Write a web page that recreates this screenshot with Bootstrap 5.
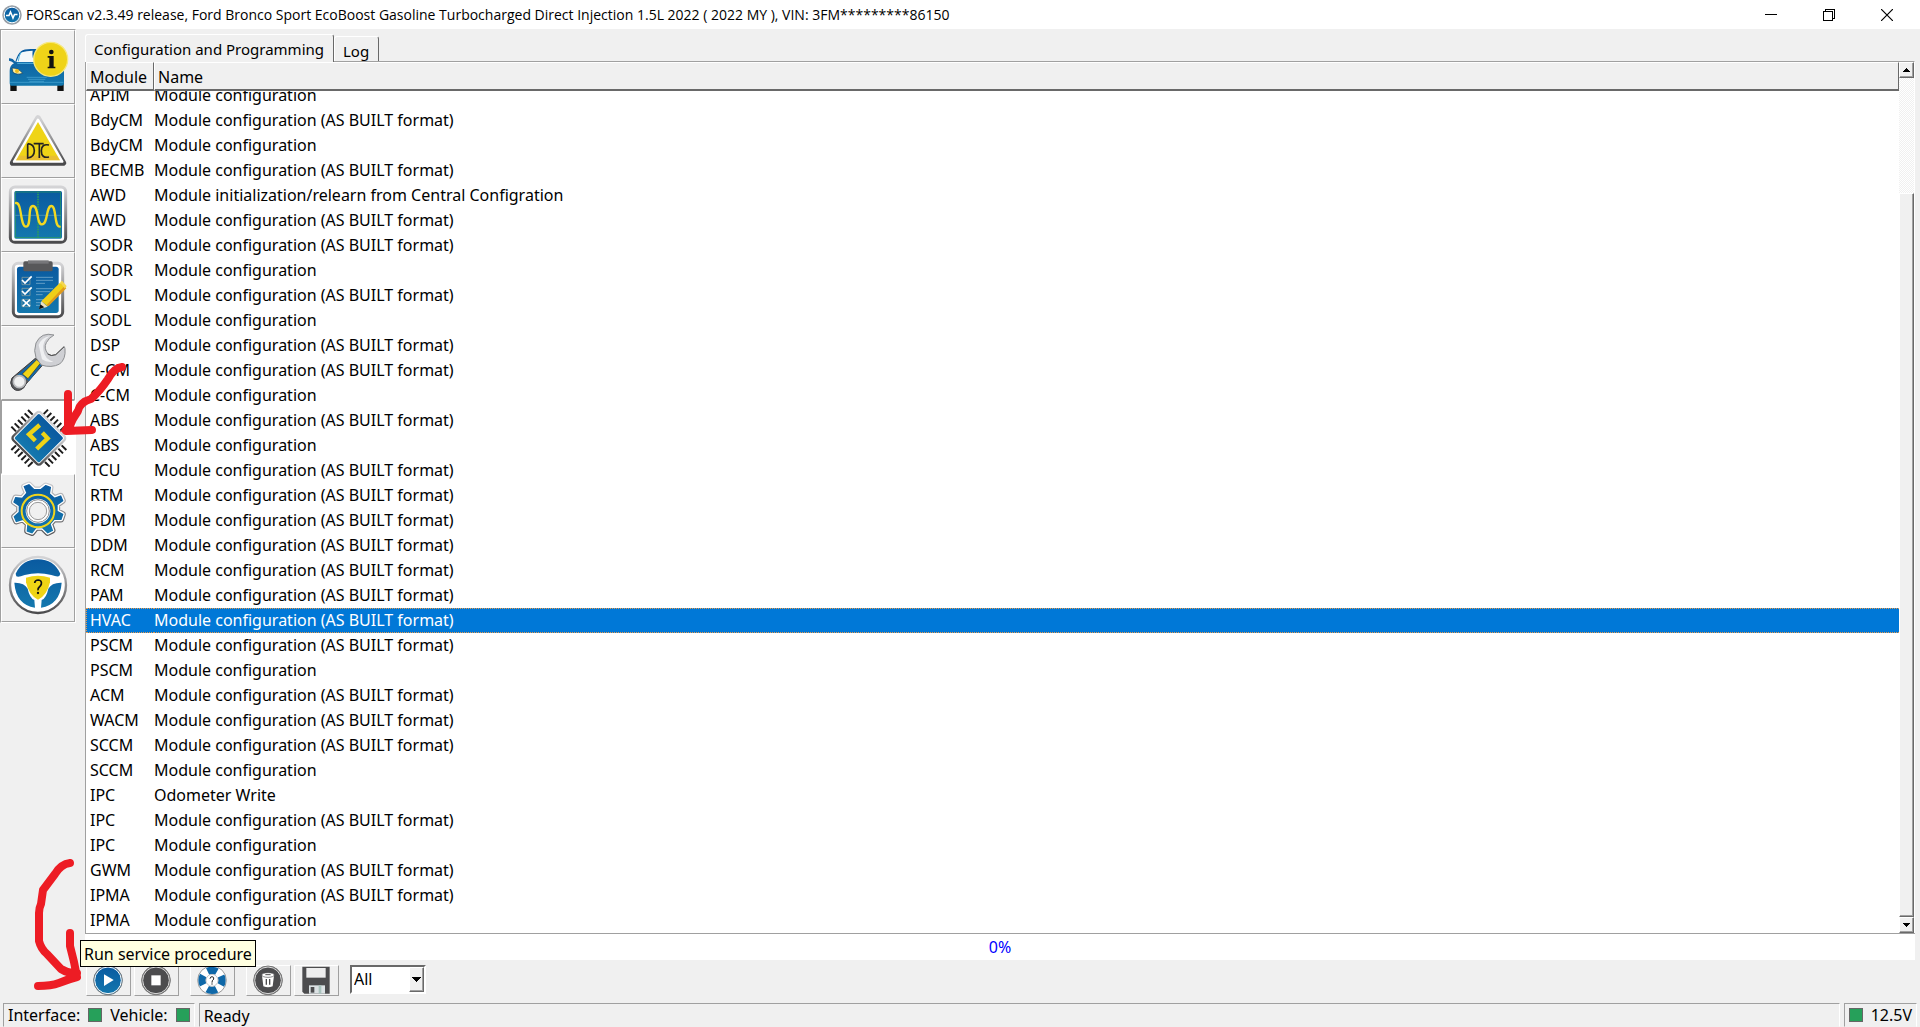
<!DOCTYPE html>
<html lang="en">
<head>
<meta charset="utf-8">
<meta name="viewport" content="width=device-width, initial-scale=1">
<title>FORScan v2.3.49 release</title>
<link href="https://cdn.jsdelivr.net/npm/bootstrap@5.3.0/dist/css/bootstrap.min.css" rel="stylesheet">
<style>
  :root { --face:#f0f0f0; --edge:#a0a0a0; --dark:#696969; }
  body { font-family:"Noto Sans","Open Sans",sans-serif; font-size:16px; line-height:25px; color:#000; background:var(--face); }
  button, select { font:inherit; color:inherit; border-radius:0; }
  .titlebar { height:29px; background:#fff; padding-left:2px; font-family:"Open Sans","Noto Sans",sans-serif; font-size:14px; line-height:28px; }
  .titlebar svg { display:block; }
  .winbtn { width:58px; height:29px; padding:0; border:0; background:none; }
  .content { min-height:0; }
  .sidebar { width:76px; border:1px solid var(--edge); border-right-color:#fff; border-bottom-color:#fff; }
  .tool { width:74px; height:74px; padding:0; background:var(--face); border:1px solid; border-color:#fff var(--edge) var(--edge) #fff; display:block; }
  .tool svg { display:block; width:74px; height:74px; margin:-1px; }
  .tool.active { background:#fff; border-color:var(--edge) #fff #fff var(--edge); }
  .workspace { margin-left:9px; margin-right:5px; padding-top:5px; min-width:0; }
  .tabbtn { font-size:15px; background:var(--face); border:solid; border-width:1px 1px 0; border-color:#fff var(--dark) #fff #fff; border-radius:3px 3px 0 0; padding:0 9px 0 8px; }
  .tabbtn.active { height:28px; margin-bottom:-1px; line-height:29px; z-index:1; position:relative; }
  .tabbtn.other { height:25px; line-height:29px; }
  .listbox { border-top:1px solid var(--edge); border-left:1px solid var(--edge); border-right:1px solid #fff; min-height:0; background:#fff; }
  .scroller { overflow:auto; scrollbar-width:none; min-width:0; }
  .scroller::-webkit-scrollbar { display:none; }
  .modules { border-collapse:separate; border-spacing:0; width:100%; }
  .modules th { position:sticky; top:0; height:29px; line-height:24px; padding:2px 3px 0; font-weight:400; background:var(--face); border:solid; border-width:1px 1px 2px 1px; border-color:#fff var(--dark) var(--dark) #fff; }
  .modules th:first-child { width:68px; }
  .modules td { height:25px; line-height:25px; padding:0 4px; white-space:nowrap; }
  .modules td + td { padding-left:0; }
  .modules tr.picked td { background:#0078d7; color:#fff; border:1px dotted #e89b4c; border-width:1px 0; line-height:23px; }
  .modules tr.picked td:first-child { border-left-width:1px; padding-left:3px; }
  .sbar { width:15px; background:repeating-conic-gradient(#fff 0 25%,#f0f0f0 0 50%) 0 0/2px 2px; }
  .sbtn { height:16px; width:15px; padding:0; background:var(--face); border:1px solid; border-color:#fff var(--dark) var(--dark) #fff; box-shadow:inset -1px -1px var(--edge); display:flex; align-items:center; justify-content:center; flex:none; }
  .thumb { flex:725 1 0; background:var(--face); border:1px solid; border-color:#fff var(--dark) var(--dark) #fff; box-shadow:inset -1px -1px var(--edge); }
  .trough { flex:115 1 0; }
  .meter { height:27px; background:#fff; border-top:1px solid var(--edge); color:#00f; line-height:26px; }
  .actions { height:43px; padding:5px 0 0 1px; gap:11px; }
  .pair { gap:3px; }
  .act { width:45px; height:31px; padding:0; background:var(--face); border:1px solid; border-color:#fff var(--edge) var(--edge) #fff; display:block; }
  .act svg { display:block; width:45px; height:31px; margin:-1px; }
  .tip { position:absolute; left:-6px; top:-25px; height:27px; padding:0 3px; border:1px solid #000; background:#ffffe1; white-space:nowrap; line-height:27px; z-index:2; }
  .pick { width:76px; height:29px; border:2px solid; border-color:var(--dark) #fff #fff var(--dark); background:#fff; }
  .pick select { appearance:none; width:100%; border:0; padding:0 0 0 2px; background:none; line-height:25px; outline:0; }
  .pick .sbtn { position:absolute; right:0; top:0; height:25px; pointer-events:none; }
  .statusbar { height:24px; padding:0 3px; gap:4px; line-height:25px; }
  .pane { border:1px solid; border-color:var(--edge) #fff var(--face) var(--edge); padding:0 4px; gap:8px; }
  .led { width:14px; height:14px; background:#26a05a; border:1px solid #666; flex:none; }
  .ink { position:absolute; left:0; z-index:5; pointer-events:none; fill:none; stroke:#ed1c24; stroke-width:8; stroke-linecap:round; stroke-linejoin:round; }
  .ink-top { top:350px; }
  .ink-bottom { bottom:27px; }
</style>
</head>
<body class="vh-100 d-flex flex-column overflow-hidden position-relative">
<svg width="0" height="0" class="position-absolute" aria-hidden="true">
  <defs>
    <linearGradient id="metal" x1="0" y1="0" x2="0" y2="1"><stop offset="0" stop-color="#d4d4d6"/><stop offset="1" stop-color="#4a4a4c"/></linearGradient>
    <linearGradient id="rim" gradientUnits="userSpaceOnUse" x1="0" y1="35" x2="0" y2="212"><stop offset="0" stop-color="#cfcfd2"/><stop offset="1" stop-color="#4a4a4c"/></linearGradient>
    <linearGradient id="sea" x1="0" y1="0" x2="0" y2="1"><stop offset="0" stop-color="#0a5aa0"/><stop offset="1" stop-color="#1478ae"/></linearGradient>
    <path id="gear" d="M137 47l14 5-3 19 15 14 19-7 6 14-17 12v20l17 9-5 15-20-1-13 15 7 19-14 7-15-15h-20l-12 15-14-5 2-21-15-14-20 6-6-14 15-13v-20l-16-11 5-13 20 2 14-16-8-19 14-6 15 15h20z"/>
  </defs>
</svg>

<header class="titlebar d-flex align-items-center flex-shrink-0">
  <svg width="20" height="20" viewBox="0 0 20 20" class="me-1 flex-shrink-0"><circle cx="10" cy="10" r="9" fill="url(#sea)" stroke="#9a9fa5" stroke-width="1.5"/><circle cx="10" cy="10" r="7.8" fill="none" stroke="#fff"/><path d="M4 10.500h3l1.500-3.500 2.500 6 1.500-3.500h3" fill="none" stroke="#fff" stroke-width="1.600"/></svg>
  <span class="text-nowrap flex-grow-1">FORScan v2.3.49 release, Ford Bronco Sport EcoBoost Gasoline Turbocharged Direct Injection 1.5L 2022 ( 2022 MY ), VIN: 3FM*********86150</span>
  <button class="winbtn" aria-label="Minimize"><svg width="12" height="12" class="mx-auto" shape-rendering="crispEdges"><path d="M0 5.500h12" stroke="#000"/></svg></button>
  <button class="winbtn" aria-label="Restore"><svg width="12" height="12" class="mx-auto" fill="none" stroke="#000" shape-rendering="crispEdges"><path d="M.5 2.500h9v9h-9zM2.500 2V.5h9v9H10"/></svg></button>
  <button class="winbtn me-1" aria-label="Close"><svg width="12" height="12" class="mx-auto"><path d="M0 0l12 12M12 0L0 12" stroke="#000" stroke-width="1.200"/></svg></button>
</header>

<div class="content d-flex flex-grow-1">
  <nav class="sidebar align-self-start flex-shrink-0" aria-label="Sections">
    <button class="tool" aria-label="Vehicle information"><svg viewBox="3 30 222 222">
      <path d="M31 190h19v23H31zM172 190h19v23h-19z" fill="#111"/>
      <path d="M27 115q10-2 19 10q8-25 17-31q10-8 35-7h40q15 3 24 32q30 5 30 30v43q0 5-8 5H34q-5 0-5-7v-38q0-15 13-22q-8-8-15-8z" fill="url(#sea)"/>
      <path d="M49 126q8-23 17-29q12-5 32-5q-3 20 6 34z" fill="#f4f8fa"/>
      <path d="M64 96q-8 10-9 28M52 130h55" stroke="#55b5de" stroke-width="3" fill="none"/>
      <path d="M36 144q20 0 32 16q-18 6-29-3z" fill="#fff1a0" stroke="#0a3a60" stroke-width="2"/><circle cx="51" cy="153" r="6" fill="#eebc20"/>
      <path d="M80 172h60M84 178h52M88 184h44M30 187h160" stroke="#4ba8d6" stroke-width="2"/>
      <circle cx="152" cy="118" r="51" fill="#efd318" stroke="#f7e87c" stroke-width="4"/>
      <circle cx="154" cy="96" r="7" fill="#111"/><path d="M143 108h18v32h5v5h-23v-5h5v-27h-5z" fill="#111"/>
    </svg></button>
    <button class="tool" aria-label="Trouble codes"><svg viewBox="3 252 222 222">
      <path d="M114 294L190 429H38z" fill="#fff" stroke="url(#metal)" stroke-width="17" stroke-linejoin="round"/>
      <path d="M114 299L187 425H42z" fill="#fff" stroke="#fff" stroke-width="7" stroke-linejoin="round"/>
      <path d="M114 306L180 421H48z" fill="#efd416"/>
      <path d="M58 407h112l10 14H48z" fill="#e3a94a" opacity=".5"/>
      <path d="M83 371v43q20-3 20-22t-20-21M101 371h30M118 371v43M147 375q-23-4-23 17q0 24 23 19" fill="none" stroke="#222" stroke-width="5"/>
    </svg></button>
    <button class="tool" aria-label="Oscilloscope"><svg viewBox="3 474 222 222">
      <rect x="31" y="501" width="166" height="166" rx="14" fill="#fff" stroke="url(#metal)" stroke-width="9"/>
      <rect x="43" y="513" width="143" height="143" rx="5" fill="url(#sea)"/>
      <rect x="46" y="516" width="136" height="137" fill="none" stroke="#2c9e5a" stroke-width="2"/>
      <path d="M114 517v136" stroke="#2c9e5a" stroke-width="5" stroke-dasharray="3 2"/><path d="M46 586h136" stroke="#5c9fc0" stroke-width="2"/>
      <path d="M48 549c18-3 12 71 30 71s3-62 21-62s9 55 27 55s12-55 28-55s8 62 25 62" fill="none" stroke="#f3d822" stroke-width="7" stroke-linecap="round"/>
    </svg></button>
    <button class="tool" aria-label="Tests"><svg viewBox="3 36 222 222">
      <rect x="40" y="70" width="148" height="160" rx="14" fill="#fff" stroke="url(#metal)" stroke-width="9"/>
      <rect x="51" y="80" width="125" height="139" rx="8" fill="url(#sea)"/>
      <rect x="70" y="64" width="88" height="30" rx="5" fill="#58585a"/><path d="M84 61h62v10H84z" fill="#77777a"/>
      <path d="M66 112h24v22H66zM66 145h24v22H66zM66 178h24v22H66z" fill="none" stroke="#9fa89c" stroke-width="2"/>
      <path d="M66 120l9 9 20-20M66 153l9 9 20-20M68 179l22 20M90 179l-22 20" fill="none" stroke="#fff" stroke-width="5"/>
      <path d="M108 112h51M108 121h51M108 130h27M108 146h51M108 155h42M108 164h20M108 179h28M108 188h22M108 196h18" stroke="#8dbad7" stroke-width="2"/>
      <path d="M124 184L180 128l18 16-55 55z" fill="#efcf18"/><path d="M139 196l54-57 6 6-53 53z" fill="#df9a1c"/><path d="M180 127l6-5 14 16-5 8z" fill="#f5d74e"/>
      <path d="M124 184l19 16-25 8z" fill="#eee1c2"/><path d="M121 193l12 9-16 6z" fill="#111"/>
    </svg></button>
    <button class="tool" aria-label="Service procedures"><svg viewBox="3 258 222 222">
      <path d="M106 355L36 414q-8 14 0 27q9 14 25 9q12-4 17-18l50-57z" fill="#58595c" stroke="#3d3d40" stroke-width="3"/>
      <path d="M104 359l-52 46 11 2 24 16 39-49z" fill="#1268a8"/><path d="M110 359l-43 43 17 14 37-46z" fill="#efd416" stroke="#333" stroke-width="2"/>
      <path d="M162 285q-38-10-54 24q-8 24 0 44l16 22q30 10 55-3q19-15 16-46l-2-6l-25 24q-14 6-24-2q-14-18-5-34q7-14 23-23z" fill="#cfd0d4" stroke="#8d8f92" stroke-width="3"/>
      <path d="M116 315q8-22 34-27q-24 14-20 42q4 28 30 35q-20 3-34-7" fill="#eff0f2"/>
      <path d="M192 320l-25 24q-14 6-24-2" fill="none" stroke="#444" stroke-width="3"/>
      <circle cx="58" cy="425" r="18" fill="#f0f0f0" stroke="#b9babd" stroke-width="5"/>
    </svg></button>
    <button class="tool active" aria-label="Configuration and Programming" aria-pressed="true"><svg viewBox="3 150 222 222">
      <g stroke="#1c1c1c" stroke-width="6">
        <path d="M34 230l14 14M44 220l14 14M54 210l14 14M64 200l14 14M74 190l14 14M84 180l14 14"/>
        <path d="M199 300l-14-14M189 310l-14-14M179 320l-14-14M169 330l-14-14M159 340l-14-14M149 350l-14-14"/>
        <path d="M144 179l-14 14M154 189l-14 14M164 199l-14 14M174 209l-14 14M184 219l-14 14M194 229l-14 14"/>
        <path d="M34 300l14-14M44 310l14-14M54 320l14-14M64 330l14-14M74 340l14-14M84 350l14-14"/>
      </g>
      <rect x="58" y="206" width="117" height="117" rx="9" transform="rotate(45 116.500 264.500)" fill="#fff" stroke="url(#metal)" stroke-width="7"/>
      <rect x="64" y="212" width="105" height="105" rx="5" transform="rotate(45 116.500 264.500)" fill="url(#sea)"/>
      <path d="M119 225L87 253L106 272M127 248L143 265L110 297" fill="none" stroke="#efd416" stroke-width="13"/>
    </svg></button>
    <button class="tool" aria-label="Settings"><svg viewBox="3 12 222 222">
      <use href="#gear" fill="url(#rim)" stroke="url(#rim)" stroke-width="19" stroke-linejoin="round"/>
      <use href="#gear" fill="#fff" stroke="#fff" stroke-width="12" stroke-linejoin="round"/>
      <use href="#gear" fill="url(#sea)" stroke="url(#sea)" stroke-width="4"/>
      <circle cx="114" cy="123" r="49" fill="none" stroke="#f0d41c" stroke-width="6"/>
      <circle cx="114" cy="123" r="37" fill="#fff"/><circle cx="114" cy="123" r="34" fill="none" stroke="#8a8a8c" stroke-width="3"/>
      <circle cx="114" cy="123" r="26" fill="#f0f0f0" stroke="#999" stroke-width="3"/>
    </svg></button>
    <button class="tool" aria-label="Help"><svg viewBox="3 234 222 222">
      <circle cx="114" cy="345" r="84" fill="#fff" stroke="url(#metal)" stroke-width="7"/>
      <path d="M47 311q20-43 67-43t67 43l-3 7q-5 4-24-3-40-10-80 0-19 8-25 4zM43 338q30-1 40 18 6 28 20 34l2 23q-57-9-62-75zM185 338q-30-1-40 18-6 28-20 34l-2 23q57-9 62-75z" fill="url(#sea)"/>
      <path d="M78 323q36-11 72 0v14q-9 40-36 52-27-12-36-52z" fill="#efd416"/>
      <path d="M104 339q1-9 11-9 11 1 9 12-1 5-6 9-5 4-4 10" fill="none" stroke="#111" stroke-width="5"/><circle cx="114" cy="369" r="3.500" fill="#111"/>
    </svg></button>
  </nav>

  <main class="workspace flex-grow-1 d-flex flex-column">
    <div class="d-flex align-items-end flex-shrink-0" role="tablist">
      <button class="tabbtn active" role="tab" aria-selected="true">Configuration and Programming</button>
      <button class="tabbtn other" role="tab" aria-selected="false">Log</button>
    </div>
    <div class="listbox d-flex flex-grow-1">
      <div class="scroller flex-grow-1" id="scroller">
        <table class="modules">
          <thead><tr><th scope="col">Module</th><th scope="col">Name</th></tr></thead>
          <tbody id="rows"></tbody>
        </table>
      </div>
      <div class="sbar d-flex flex-column flex-shrink-0">
        <button class="sbtn" aria-label="Scroll up"><svg width="7" height="4" shape-rendering="crispEdges"><path d="M3 0h1v1h1v1h1v1h1v1H0V3h1V2h1V1h1z"/></svg></button>
        <div class="trough"></div>
        <div class="thumb"></div>
        <button class="sbtn" aria-label="Scroll down"><svg width="7" height="4" shape-rendering="crispEdges"><path d="M0 0h7v1H6v1H5v1H4v1H3V3H2V2H1V1H0z"/></svg></button>
      </div>
    </div>
    <div class="meter text-center flex-shrink-0" role="progressbar" aria-valuenow="0" aria-valuemin="0" aria-valuemax="100" aria-label="Progress">0%</div>
    <div class="actions d-flex align-items-start flex-shrink-0">
      <div class="pair d-flex">
        <div class="position-relative">
          <button class="act" aria-label="Run" aria-describedby="tip"><svg viewBox="258 375 135 93"><circle cx="324" cy="421" r="43" fill="url(#sea)" stroke="#777" stroke-width="3"/><circle cx="324" cy="421" r="40" fill="none" stroke="#fff" stroke-width="3"/><path d="M312 403l29 17-29 18z" fill="#fff"/></svg></button>
          <div class="tip" id="tip" role="tooltip">Run service procedure</div>
        </div>
        <button class="act" aria-label="Stop"><svg viewBox="402 375 135 93"><circle cx="468" cy="421" r="43" fill="#4c4c4e" stroke="#777" stroke-width="3"/><circle cx="468" cy="421" r="40" fill="none" stroke="#ddd" stroke-width="3"/><path d="M454 406h28v30h-28z" fill="#fff"/></svg></button>
      </div>
      <button class="act" aria-label="Help"><svg viewBox="570 375 135 93"><circle cx="636" cy="421" r="43" fill="#fff" stroke="#999" stroke-width="3"/><circle cx="636" cy="421" r="30" fill="none" stroke="#0f68a8" stroke-width="22" stroke-dasharray="29 18.120" stroke-dashoffset="14.500"/><circle cx="636" cy="421" r="18" fill="#fff" stroke="#aaa" stroke-width="2"/><path d="M630 416q1-6 6-6 7 1 5 7-1 3-4 5l-1 6M636 430v4" fill="none" stroke="#222" stroke-width="3"/></svg></button>
      <div class="pair d-flex">
        <button class="act" aria-label="Delete"><svg viewBox="738 375 135 93"><circle cx="804" cy="421" r="43" fill="#4c4c4e" stroke="#777" stroke-width="3"/><circle cx="804" cy="421" r="40" fill="none" stroke="#ddd" stroke-width="3"/><path d="M786 407h36l-4 32q-14 6-28 0z" fill="#fff"/><ellipse cx="804" cy="405" rx="19" ry="7" fill="#fff" stroke="#4c4c4e" stroke-width="2"/><path d="M796 404h16" stroke="#4c4c4e" stroke-width="3"/><path d="M799 417v17M809 417v17" stroke="#4c4c4e" stroke-width="4"/></svg></button>
        <button class="act" aria-label="Save"><svg viewBox="882 375 135 93"><path d="M907 380h82v81h-76l-6-6z" fill="#4c4c4e"/><path d="M919 384h58v29h-58z" fill="#eee"/><path d="M927 436h48v25h-48z" fill="#dce2e4"/><path d="M932 441h11v17h-11z" fill="#4c4c4e"/><path d="M956 436h8v25h-8z" fill="#a9c3bd"/></svg></button>
      </div>
      <div class="pick position-relative">
        <select aria-label="Module filter" class="d-block"><option>All</option></select>
        <span class="sbtn"><svg width="9" height="5" shape-rendering="crispEdges"><path d="M0 0h9v1H8v1H7v1H6v1H5v1H4V4H3V3H2V2H1V1H0z"/></svg></span>
      </div>
    </div>
  </main>
</div>

<footer class="statusbar d-flex flex-shrink-0">
  <div class="pane d-flex align-items-center"><span>Interface:</span><i class="led"></i><span>Vehicle:</span><i class="led"></i></div>
  <div class="pane flex-grow-1">Ready</div>
  <div class="pane d-flex align-items-center"><i class="led"></i><span>12.5V</span></div>
</footer>

<svg class="ink ink-top" width="140" height="100" viewBox="0 350 140 100"><path d="M122 367q-8 1-14 12-8 12-17 20-11 3-13 12-6 8-9 17M68 394v34l-2 3 26-1"/><path d="M60 432l8-13 8 10z" fill="#ed1c24" stroke="none"/></svg>
<svg class="ink ink-bottom" width="100" height="160" viewBox="0 840 100 160"><path d="M70 863q-9 1-15 11l-12 16-2 14q-2 4-2 9v28q2 8 8 13l14 15q8 5 16 4M70 933v13l4 16 3 15q-8 2-18 6-8 3-21 3"/></svg>

<script src="https://cdn.jsdelivr.net/npm/bootstrap@5.3.0/dist/js/bootstrap.bundle.min.js"></script>
<script>
  // Suffixes: "*" AS BUILT format, "+" initialization, "-" odometer; none is the plain configuration.
  const list = 'APIM BdyCM* BdyCM BECMB* AWD+ AWD* SODR* SODR SODL* SODL DSP* C-CM* C-CM ABS* ABS TCU* RTM* PDM* DDM* RCM* PAM* HVAC* PSCM* PSCM ACM* WACM* SCCM* SCCM IPC- IPC* IPC GWM* IPMA* IPMA'.split(' ');
  const names = {
    '*': 'Module configuration (AS BUILT format)',
    '+': 'Module initialization/relearn from Central Configration',
    '-': 'Odometer Write'
  };
  document.getElementById('rows').innerHTML = list.map(item => {
    const kind = names[item.slice(-1)];
    const code = kind ? item.slice(0, -1) : item;
    return `<tr${code === 'HVAC' ? ' class="picked"' : ''}><td>${code}</td><td>${kind || 'Module configuration'}</td></tr>`;
  }).join('');
  const box = document.getElementById('scroller');
  box.scrollTop = box.scrollHeight;
</script>
</body>
</html>
